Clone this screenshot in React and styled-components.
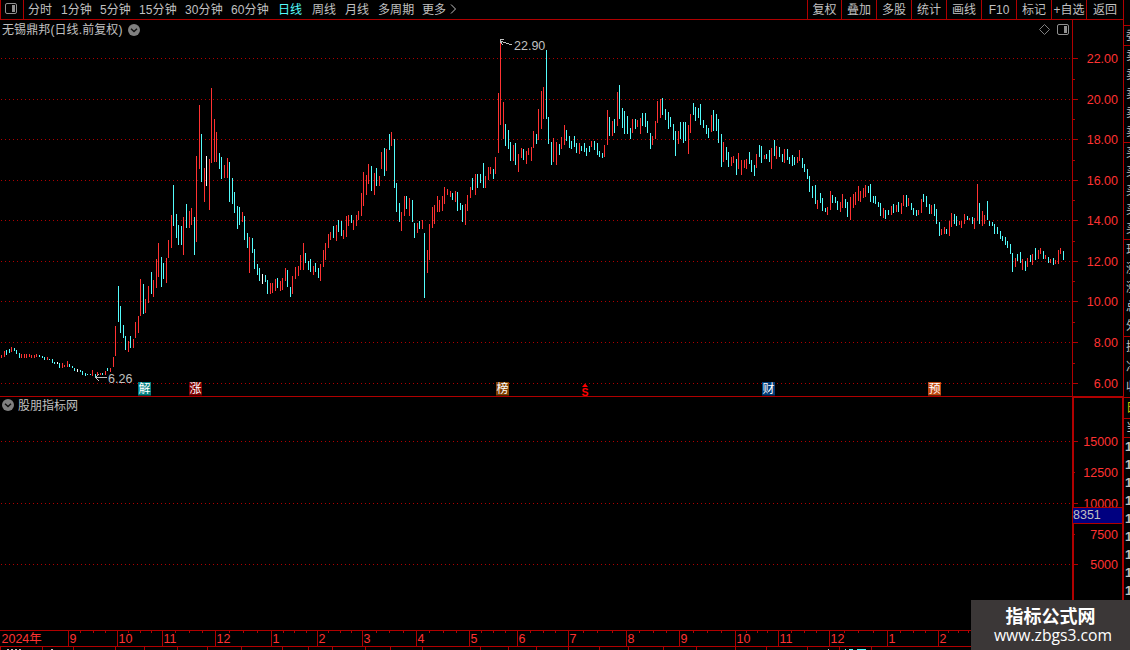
import React from "react";
import styled, { createGlobalStyle } from "styled-components";

const LINE = "#b00000";
const RED = "#ff3232";
const CYAN = "#54fcfc";
const GREY = "#c0c0c0";

const periods = [
  { label: "分时", width: 33 },
  { label: "1分钟", width: 39 },
  { label: "5分钟", width: 39 },
  { label: "15分钟", width: 46 },
  { label: "30分钟", width: 46 },
  { label: "60分钟", width: 47 },
  { label: "日线", width: 34, active: true },
  { label: "周线", width: 33 },
  { label: "月线", width: 33 },
  { label: "多周期", width: 44 },
  { label: "更多", width: 28 },
];

const tools = [
  { label: "复权", width: 34 },
  { label: "叠加", width: 35 },
  { label: "多股", width: 35 },
  { label: "统计", width: 35 },
  { label: "画线", width: 35 },
  { label: "F10", width: 35 },
  { label: "标记", width: 35 },
  { label: "+自选", width: 35 },
  { label: "返回", width: 37 },
];

// colour, x, high, low
const bars = `
r 1 355 358,r 4 351 357,c 6 350 355,c 9 349 353,r 11 347 352,c 14 348 351,c 16 350 354,c 19 353 358
r 21 354 358,r 24 354 358,r 26 354 358,r 29 354 357,r 31 355 358,r 34 355 358,r 36 354 357,c 39 355 357
c 42 356 358,c 44 357 360,r 47 357 360,c 49 359 360,c 52 359 363,c 54 362 364,w 57 362 364,c 59 363 368
r 62 363 368,r 64 365 367,r 67 361 367,c 69 364 367,c 72 366 368,c 74 368 371,w 77 369 372,c 80 370 372
c 82 371 375,c 85 373 376,c 87 374 375,c 90 374 375,r 92 370 376,c 95 374 378,r 97 372 376,r 100 373 375
c 102 373 375,r 105 371 375,c 107 368 371,r 110 368 372,r 113 357 367,r 115 326 356,c 118 286 322
c 120 306 333,c 123 325 338,c 125 336 350,r 128 341 352,c 130 336 348,r 133 339 348,r 135 322 338
r 138 316 333,r 140 279 316,c 143 284 314,r 145 299 313,r 148 286 303,c 151 272 294,r 153 280 297
r 156 259 288,r 158 243 277,c 161 257 287,c 163 263 279,r 166 258 283,r 168 240 258,r 171 215 248
c 173 185 226,c 176 214 238,c 178 225 245,c 181 226 245,r 183 217 255,c 186 204 228,r 189 211 228
r 191 208 225,c 194 217 255,r 196 156 242,r 199 105 169,c 201 134 182,r 204 168 202,w 206 156 186
r 209 159 210,r 211 88 163,r 214 119 162,r 216 132 162,c 219 153 169,c 221 157 179,r 224 165 178
r 227 158 178,c 229 162 202,c 232 178 204,c 234 192 213,c 237 206 229,c 239 207 225,r 242 212 222
c 244 216 240,c 247 233 248,r 249 237 273,c 252 238 253,c 254 249 269,c 257 264 275,c 259 268 281
w 262 274 284,c 265 275 282,c 267 280 294,r 270 283 294,r 272 283 293,r 275 279 291,c 277 278 288
r 280 281 291,r 282 278 290,r 285 268 281,c 287 270 287,c 290 287 297,r 292 276 294,r 295 267 279
r 298 266 276,r 300 255 270,r 303 243 270,c 305 253 263,c 308 261 270,c 310 259 272,r 313 266 275
c 315 263 272,c 318 268 278,r 320 264 281,r 323 250 267,r 325 243 260,r 328 234 248,r 330 232 240
c 333 226 238,r 336 225 241,c 338 220 232,c 341 221 236,r 343 230 239,r 346 216 237,r 348 215 226
c 351 215 223,r 353 220 230,r 356 215 226,r 358 211 220,r 361 193 216,r 363 172 206,r 366 175 195
r 368 164 184,c 371 166 191,r 374 173 195,c 376 168 186,r 379 176 186,r 381 152 169,c 384 148 176
r 386 149 171,c 389 134 150,r 391 132 146,c 394 139 188,c 396 183 212,c 399 203 222,r 401 212 231
r 404 196 216,c 406 196 209,r 409 198 216,c 412 200 222,c 414 223 238,r 417 223 233,c 419 221 229
r 422 220 229,c 424 233 298,r 427 250 273,r 429 224 260,r 432 207 228,r 434 205 224,r 437 196 212
r 439 200 212,r 442 196 211,r 444 187 204,r 447 189 195,r 450 191 197,c 452 193 200,r 455 191 202
c 457 192 211,c 460 203 210,c 462 205 222,r 465 204 225,r 467 195 211,r 470 187 198,c 472 178 190
r 475 174 195,c 477 174 188,c 480 174 183,c 483 163 188,r 485 176 188,r 488 167 180,r 490 167 174
c 493 169 179,r 495 157 174,r 498 93 153,r 500 43 125,r 503 102 139,c 505 124 146,c 508 130 149
c 510 142 161,r 513 145 161,c 515 143 165,r 518 154 172,r 521 148 158,c 523 149 160,r 526 151 164
r 528 148 155,r 531 147 161,r 533 131 148,c 536 134 144,r 538 109 140,r 541 91 129,r 543 87 119
c 546 50 119,c 548 117 144,c 551 142 165,r 553 138 162,r 556 142 165,c 559 144 155,r 561 137 149
r 564 125 145,c 566 130 141,c 569 136 148,c 571 141 149,c 574 136 147,c 576 143 153,r 579 143 154
c 581 146 151,c 584 143 152,c 586 148 156,c 589 146 152,r 591 141 147,c 594 141 150,c 597 143 155
c 599 151 157,c 602 153 158,r 604 145 157,r 607 110 145,c 609 117 136,r 612 121 136,c 614 119 133
r 617 92 126,c 619 85 119,c 622 108 128,c 624 111 134,c 627 116 134,c 630 128 139,r 632 119 133
c 635 119 129,r 637 120 127,r 640 118 134,c 642 113 126,c 645 113 127,c 647 121 133,c 650 133 149
r 652 136 145,r 655 121 139,r 657 101 123,r 660 99 118,c 662 98 115,c 665 109 120,c 668 112 129
c 670 117 127,c 673 124 140,c 675 131 156,r 678 131 144,c 680 122 139,c 683 122 143,c 685 122 141
r 688 125 154,r 690 114 133,c 693 103 115,c 695 107 121,c 698 108 118,c 700 104 125,c 703 120 128
c 706 125 134,c 708 128 138,r 711 115 132,c 713 110 131,c 716 114 131,c 718 119 143,c 721 134 167
r 723 142 162,c 726 147 160,c 728 152 167,r 731 157 166,r 733 156 163,c 736 159 175,r 738 153 169
r 741 160 175,r 744 160 168,r 746 159 169,c 749 152 164,c 751 160 172,c 754 165 176,r 756 154 168
c 759 145 157,c 761 146 163,r 764 155 159,c 766 154 159,c 769 150 162,r 771 148 169,c 774 140 156
r 776 146 159,c 779 147 157,c 782 154 162,r 784 149 163,c 787 149 160,c 789 157 164,c 792 155 166
c 794 157 165,r 797 157 163,r 799 150 161,c 802 158 168,c 804 164 172,c 807 169 179,c 809 176 192
c 812 186 198,c 815 185 204,r 817 200 209,c 820 193 203,c 822 198 211,c 825 208 212,r 827 207 215
r 830 191 210,c 832 195 203,c 835 197 203,c 837 201 210,r 840 202 212,r 842 194 208,c 845 199 208
c 847 202 217,r 850 197 220,r 853 194 208,r 855 192 205,r 858 186 201,r 860 191 202,r 863 188 198
r 865 185 197,c 868 186 193,c 870 184 202,c 873 196 203,c 875 196 204,c 878 202 207,c 880 203 216
r 883 208 218,c 885 210 219,c 888 210 215,r 891 206 215,c 893 204 213,r 896 205 212,c 898 202 212
r 901 203 214,r 903 195 206,c 906 195 207,r 908 198 206,c 911 203 210,c 913 208 215,c 916 210 216
r 918 210 215,r 921 199 213,c 923 194 202,c 926 196 207,c 929 204 214,r 931 205 214,c 934 204 216
c 936 209 224,c 939 222 236,r 941 229 235,r 944 227 234,c 946 229 234,r 949 221 236,r 951 213 227
c 954 214 224,c 956 216 226,r 959 221 225,r 961 221 228,r 964 214 224,c 967 216 220,r 969 218 220
c 972 217 224,r 974 218 229,r 977 184 221,c 979 203 224,r 982 211 226,r 984 215 224,c 987 201 220
c 989 221 226,c 992 222 226,c 994 224 234,c 997 227 234,c 1000 231 239,c 1002 236 241,c 1005 237 245
c 1007 241 248,c 1010 244 254,c 1012 253 272,r 1015 258 267,c 1017 254 261,c 1020 252 263,r 1022 259 270
c 1025 261 271,r 1027 258 267,c 1030 255 262,r 1032 254 265,c 1035 248 260,r 1038 250 259,r 1040 248 254
c 1043 251 259,r 1045 255 259,c 1048 257 263,r 1050 259 263,c 1053 258 265,r 1055 260 264,r 1058 250 264
r 1060 248 254,c 1063 251 260`
  .trim()
  .split(/[\n,]/)
  .map((row) => {
    const [tone, x, high, low] = row.split(" ");
    return { tone, x: +x, high: +high, low: +low };
  });

const tones = { r: RED, c: CYAN, w: "#ffffff" };

const priceScale = [
  { y: 58, label: "22.00" },
  { y: 99, label: "20.00" },
  { y: 139, label: "18.00" },
  { y: 180, label: "16.00" },
  { y: 220, label: "14.00" },
  { y: 261, label: "12.00" },
  { y: 301, label: "10.00" },
  { y: 342, label: "8.00" },
  { y: 383, label: "6.00" },
];
const priceMinor = [79, 119, 160, 200, 241, 281, 322, 363];

const volumeScale = [
  { y: 441, label: "15000", major: true },
  { y: 472, label: "12500" },
  { y: 503, label: "10000", major: true },
  { y: 534, label: "7500" },
  { y: 564, label: "5000", major: true },
];

const events = [
  { x: 138, label: "解", color: "#008080" },
  { x: 189, label: "涨", color: "#800000" },
  { x: 496, label: "榜", color: "#804000" },
  { x: 762, label: "财", color: "#003c78" },
  { x: 928, label: "预", color: "#c04810" },
];

const months = [
  { x: 0, label: "2024年" },
  { x: 68, label: "9" },
  { x: 117, label: "10" },
  { x: 162, label: "11" },
  { x: 215, label: "12" },
  { x: 271, label: "1" },
  { x: 317, label: "2" },
  { x: 362, label: "3" },
  { x: 416, label: "4" },
  { x: 469, label: "5" },
  { x: 517, label: "6" },
  { x: 568, label: "7" },
  { x: 626, label: "8" },
  { x: 679, label: "9" },
  { x: 735, label: "10" },
  { x: 778, label: "11" },
  { x: 829, label: "12" },
  { x: 887, label: "1" },
  { x: 938, label: "2" },
];

const footerTicks = [
  0, 42, 73, 115, 144, 177, 207, 241, 282, 308, 332, 365, 390, 422, 480, 508,
  536, 568, 599, 628, 663, 696, 735, 766, 807, 839, 871,
];

const quoteGroups = [
  { height: 26, rows: [] },
  { height: 20, rows: ["委"] },
  { height: 97, rows: ["卖", "卖", "卖", "卖", "卖"] },
  { height: 97, rows: ["买", "买", "买", "买", "买"] },
  { height: 97, rows: ["现", "涨", "涨", "总", "外"] },
  { height: 61, rows: ["换", "净", "收"] },
  { height: 21, rows: ["日"], color: "#c8c800" },
  { height: 19, rows: ["当"] },
];

const DotLines = ({ ys, width }) =>
  ys.map((y) => (
    <line
      key={y}
      x1="1"
      x2={width}
      y1={y + 0.5}
      y2={y + 0.5}
      stroke={LINE}
      strokeDasharray="1 3"
    />
  ));

const PanelIcon = ({ color = "#909090" }) => (
  <svg width="12" height="11" viewBox="0 0 12 11">
    <rect x="0.5" y="0.5" width="11" height="10" rx="1.5" fill="none" stroke={color} />
    <rect x="7" y="2" width="3" height="7" fill={color} />
  </svg>
);

const DropIcon = () => (
  <svg width="12" height="12" viewBox="0 0 12 12">
    <circle cx="6" cy="6" r="6" fill="#808080" />
    <path d="M3 4.7 L6 7.6 L9 4.7" fill="none" stroke="#101010" strokeWidth="1.4" />
  </svg>
);

export default function App() {
  return (
    <Page>
      <GlobalStyle />
      <Main>
        <TopBar>
          <PanelButton>
            <PanelIcon />
          </PanelButton>
          {periods.map((p) => (
            <Period key={p.label} $width={p.width} $active={p.active}>
              {p.label}
            </Period>
          ))}
          <MoreArrow width="7" height="10" viewBox="0 0 7 10">
            <path d="M1 0.5 L5.5 5 L1 9.5" fill="none" stroke={GREY} />
          </MoreArrow>
          <Tools>
            {tools.map((t) => (
              <Tool key={t.label} $width={t.width}>
                {t.label}
              </Tool>
            ))}
          </Tools>
        </TopBar>

        <Pane $height={376}>
          <Plot>
            <Canvas width="1072" height="376" viewBox="0 20 1072 376">
              <g shapeRendering="crispEdges">
                <DotLines ys={priceScale.map((p) => p.y)} width={1071} />
                {bars.map((b) => (
                  <rect
                    key={b.x}
                    x={b.x}
                    y={b.high}
                    width="1"
                    height={b.low - b.high}
                    fill={tones[b.tone]}
                  />
                ))}
              </g>
              <g fill="none" stroke={GREY} shapeRendering="crispEdges">
                <path d="M95 377.5 H107 M99 374 L95.5 377.5 L99 381" />
                <path d="M500 41 L512 45 M504 39.5 H500.5 V42 L503 45" />
              </g>
              <Note x="108" y="383">6.26</Note>
              <Note x="514" y="50">22.90</Note>
              {events.map((e) => (
                <g key={e.label}>
                  <rect x={e.x} y="382" width="13" height="13.5" fill={e.color} />
                  <EventText x={e.x + 6.5} y="393.3">{e.label}</EventText>
                </g>
              ))}
              <path d="M585 383.5 L588 387 H582 Z" fill="#ff0000" />
              <Dollar x="585" y="395.5">S</Dollar>
            </Canvas>
            <PaneHeader>
              <span>无锡鼎邦(日线.前复权)</span>
              <DropIcon />
              <HeaderTools>
                <svg width="11" height="11" viewBox="0 0 11 11">
                  <path d="M5.5 0.5 L10.5 5.5 L5.5 10.5 L0.5 5.5 Z" fill="none" stroke="#808080" />
                </svg>
                <PanelIcon />
              </HeaderTools>
            </PaneHeader>
          </Plot>
          <Scale>
            <Canvas width="50" height="376" viewBox="1073 20 50 376" shapeRendering="crispEdges">
              {priceScale.map((p) => (
                <rect key={p.y} x="1073" y={p.y} width="5" height="1" fill={LINE} />
              ))}
              {priceMinor.map((y) => (
                <rect key={y} x="1073" y={y} width="2" height="1" fill={LINE} />
              ))}
            </Canvas>
            <svg width="50" height="376" viewBox="1073 20 50 376">
              {priceScale.map((p) => (
                <ScaleText key={p.y} x="1118" y={p.y + 5}>
                  {p.label}
                </ScaleText>
              ))}
            </svg>
          </Scale>
        </Pane>

        <Pane $height={234} $ruled>
          <Plot>
            <Canvas width="1072" height="233" viewBox="0 397 1072 233" shapeRendering="crispEdges">
              <DotLines ys={[441, 503, 564]} width={1071} />
            </Canvas>
            <IndicatorHeader>
              <DropIcon />
              <span>股朋指标网</span>
            </IndicatorHeader>
          </Plot>
          <Scale $framed>
            <svg width="48" height="232" viewBox="1074 398 48 232">
              {volumeScale.map((v) => (
                <g key={v.y}>
                  <rect x="1074" y={v.y} width={v.major ? 4 : 1} height="1" fill={LINE} />
                  <ScaleText x="1118" y={v.y + 5}>{v.label}</ScaleText>
                </g>
              ))}
            </svg>
            <Cursor>8351</Cursor>
          </Scale>
        </Pane>

        <TimeAxis>
          {months.map((m, i) => {
            const width = (months[i + 1]?.x ?? 978) - m.x;
            return (
              <Month key={m.x} $width={width} $first={i === 0}>
                {i > 0 && (
                  <Quarters>
                    <i />
                    <i />
                    <i />
                  </Quarters>
                )}
                {m.label}
              </Month>
            );
          })}
        </TimeAxis>
        <svg width="1123" height="3" viewBox="0 647 1123 3" shapeRendering="crispEdges">
          {footerTicks.map((x) => (
            <rect key={x} x={x} y="647" width="1" height="3" fill={LINE} />
          ))}
          <path d="M7 649.5h2M11 649.5h2M15 649.5h2M19 649.5h2M51 649.5h2M828 649.5h1" stroke={GREY} />
          <path d="M845 649.5h1M849 649.5h4M857 649.5h9" stroke={CYAN} />
        </svg>
      </Main>

      <Quotes>
        {quoteGroups.map((g, i) => (
          <QuoteGroup key={i} $height={g.height} $color={g.color}>
            {g.rows.map((r, j) => (
              <span key={j}>{r}</span>
            ))}
          </QuoteGroup>
        ))}
        <Trades>
          {Array.from({ length: 9 }, (_, i) => (
            <span key={i}>1</span>
          ))}
        </Trades>
      </Quotes>

      <Watermark>
        <strong>指标公式网</strong>
        <span>www.zbgs3.com</span>
      </Watermark>
    </Page>
  );
}

const GlobalStyle = createGlobalStyle`
  * {
    box-sizing: border-box;
  }
  body {
    margin: 0;
    background: #000;
    overflow: hidden;
  }
  svg {
    display: block;
    flex: none;
  }
`;

const Page = styled.div`
  position: relative;
  display: flex;
  width: 1130px;
  height: 650px;
  overflow: hidden;
  background: #000;
  color: ${GREY};
  font: 400 12px "Liberation Sans", "Noto Sans CJK SC", sans-serif;
`;

const Main = styled.div`
  display: flex;
  flex-direction: column;
  width: 1124px;
  border-right: 1px solid ${LINE};
`;

const TopBar = styled.div`
  display: flex;
  align-items: center;
  height: 20px;
  border-bottom: 1px solid ${LINE};
  white-space: nowrap;
`;

const PanelButton = styled.div`
  display: flex;
  align-items: center;
  width: 24px;
  height: 19px;
  margin-right: 4px;
  padding: 0 0 2px 4px;
  border: solid ${LINE};
  border-width: 0 1px;
`;

const Period = styled.div`
  width: ${(p) => p.$width}px;
  height: 19px;
  line-height: 21px;
  letter-spacing: 0.1px;
  color: ${(p) => (p.$active ? CYAN : GREY)};
`;

const MoreArrow = styled.svg`
  margin-bottom: 2px;
`;

const Tools = styled.div`
  display: flex;
  margin-left: auto;
`;

const Tool = styled.div`
  width: ${(p) => p.$width}px;
  height: 19px;
  line-height: 21px;
  border-left: 1px solid ${LINE};
  text-align: center;
`;

const Pane = styled.div`
  display: flex;
  height: ${(p) => p.$height}px;
  border-top: ${(p) => (p.$ruled ? `1px solid ${LINE}` : "none")};
`;

const Plot = styled.div`
  position: relative;
  width: 1072px;
`;

const Canvas = styled.svg`
  position: absolute;
  top: 0;
  left: 0;
`;

const PaneHeader = styled.div`
  position: relative;
  display: flex;
  align-items: center;
  gap: 5px;
  height: 19px;
  padding: 0 3px 0 2px;
  letter-spacing: 0.1px;
  span {
    padding-bottom: 2px;
  }
`;

const HeaderTools = styled.div`
  display: flex;
  align-items: center;
  gap: 7px;
  margin-left: auto;
`;

const IndicatorHeader = styled(PaneHeader)`
  gap: 4px;
  height: 16px;
  letter-spacing: 0;
`;

const Scale = styled.div`
  position: relative;
  flex: 1;
  border-left: 1px solid ${LINE};
  ${(p) =>
    p.$framed &&
    `
    border-left-width: 2px;
    border-top: 1px solid ${LINE};
    border-right: 1px solid ${LINE};
  `}
`;

const Note = styled.text`
  fill: ${GREY};
  font-size: 12.5px;
`;

const ScaleText = styled.text`
  fill: ${RED};
  font-size: 12.5px;
  text-anchor: end;
`;

const EventText = styled.text`
  fill: #fff;
  font-size: 12px;
  text-anchor: middle;
`;

const Dollar = styled.text`
  fill: #ff0000;
  font-size: 10.5px;
  font-weight: 700;
  text-anchor: middle;
`;

const Cursor = styled.div`
  position: absolute;
  top: 109px;
  left: -1px;
  right: 0;
  height: 17px;
  border: solid ${LINE};
  border-width: 1px 0;
  background: #000080;
  font-size: 12.5px;
  line-height: 15px;
`;

const TimeAxis = styled.div`
  display: flex;
  height: 17px;
  border: solid ${LINE};
  border-width: 1px 0;
  color: ${RED};
`;

const Month = styled.div`
  position: relative;
  width: ${(p) => p.$width}px;
  padding-left: ${(p) => (p.$first ? 1.5 : 0.5)}px;
  border-left: ${(p) => (p.$first ? "none" : `1px solid ${LINE}`)};
  font-size: 12.5px;
  line-height: 17px;
  height: 15px;
  white-space: nowrap;
`;

const Quarters = styled.div`
  position: absolute;
  inset: 0 0 auto 0;
  display: flex;
  justify-content: space-evenly;
  i {
    width: 1px;
    height: 2px;
    background: ${LINE};
  }
`;

const Quotes = styled.div`
  width: 6px;
  overflow: hidden;
`;

const QuoteGroup = styled.div`
  display: flex;
  flex-direction: column;
  justify-content: space-around;
  height: ${(p) => p.$height}px;
  padding-left: 2px;
  border-bottom: 1px solid ${LINE};
  color: ${(p) => p.$color || GREY};
  line-height: 18px;
`;

const Trades = styled.div`
  display: flex;
  flex-direction: column;
  padding-left: 1px;
  font-size: 13px;
  font-weight: 700;
  line-height: 18px;
`;

const Watermark = styled.div`
  position: absolute;
  right: 0;
  bottom: 0;
  display: flex;
  flex-direction: column;
  align-items: center;
  width: 159px;
  height: 50px;
  padding-top: 4px;
  background: #3b3737;
  color: #fff;
  strong {
    font: 700 18px/22px "Noto Sans CJK SC", sans-serif;
  }
  span {
    margin-right: -5px;
    font: 400 15.7px/19px "Open Sans", "Noto Sans", sans-serif;
  }
`;
